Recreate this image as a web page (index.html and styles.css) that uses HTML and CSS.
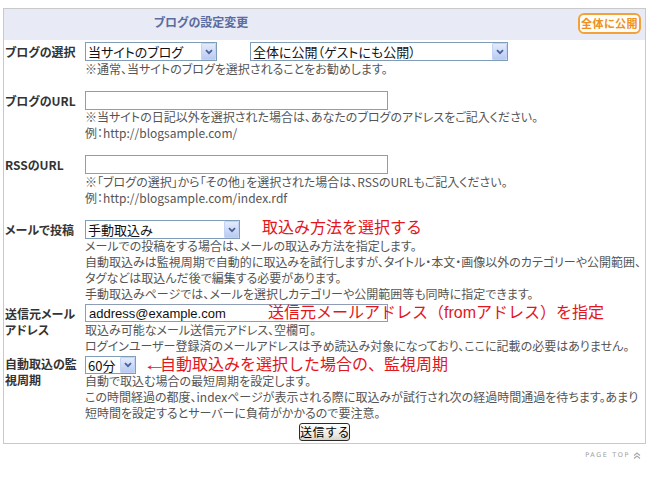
FILE: index.html
```html
<!DOCTYPE html>
<html lang="ja">
<head>
<meta charset="utf-8">
<title>ブログの設定変更</title>
<link rel="stylesheet" href="styles.css">
</head>
<body>
<div class="panel">
  <div class="panel-head">
    <h2 class="panel-title">ブログの設定変更</h2>
    <span class="badge">全体に公開</span>
  </div>
  <form class="form">
    <div class="row row-spaced">
      <div class="label">ブログの選択</div>
      <div class="field">
        <div class="controls">
          <span class="select w-blog"><select><option>当サイトのブログ</option></select><span class="arrow"><svg width="8" height="6" viewBox="0 0 8 6"><path d="M1 1.2 L4 4.2 L7 1.2" fill="none" stroke="#4a6299" stroke-width="1.8"/></svg></span></span>
          <span class="select w-scope"><select><option>全体に公開（ゲストにも公開）</option></select><span class="arrow"><svg width="8" height="6" viewBox="0 0 8 6"><path d="M1 1.2 L4 4.2 L7 1.2" fill="none" stroke="#4a6299" stroke-width="1.8"/></svg></span></span>
        </div>
        <p class="note">※通常、当サイトのブログを選択されることをお勧めします。</p>
      </div>
    </div>

    <div class="row row-spaced">
      <div class="label">ブログのURL</div>
      <div class="field">
        <div class="controls"><input class="text-input" type="text" value=""></div>
        <p class="note note-up">※当サイトの日記以外を選択された場合は、あなたのブログのアドレスをご記入ください。<br>例：http://blogsample.com/</p>
      </div>
    </div>

    <div class="row row-spaced">
      <div class="label">RSSのURL</div>
      <div class="field">
        <div class="controls"><input class="text-input" type="text" value=""></div>
        <p class="note">※「ブログの選択」から「その他」を選択された場合は、RSSのURLもご記入ください。<br>例：http://blogsample.com/index.rdf</p>
      </div>
    </div>

    <div class="row">
      <div class="label">メールで投稿</div>
      <div class="field">
        <div class="controls">
          <span class="select w-mail"><select><option>手動取込み</option></select><span class="arrow"><svg width="8" height="6" viewBox="0 0 8 6"><path d="M1 1.2 L4 4.2 L7 1.2" fill="none" stroke="#4a6299" stroke-width="1.8"/></svg></span></span>
          <span class="hint hint-mail">取込み方法を選択する</span>
        </div>
        <p class="note note-up">メールでの投稿をする場合は、メールの取込み方法を指定します。<br>自動取込みは監視周期で自動的に取込みを試行しますが、タイトル・本文・画像以外のカテゴリーや公開範囲、<br>タグなどは取込んだ後で編集する必要があります。<br>手動取込みページでは、メールを選択しカテゴリーや公開範囲等も同時に指定できます。</p>
      </div>
    </div>

    <div class="row">
      <div class="label">送信元メールアドレス</div>
      <div class="field">
        <div class="controls controls-short">
          <input class="text-input text-mono" type="text" value="address@example.com">
          <span class="hint hint-over">送信元メールアドレス（fromアドレス）を指定</span>
        </div>
        <p class="note">取込み可能なメール送信元アドレス、空欄可。<br>ログインユーザー登録済のメールアドレスは予め読込み対象になっており、ここに記載の必要はありません。</p>
      </div>
    </div>

    <div class="row">
      <div class="label label-tight">自動取込の監視周期</div>
      <div class="field">
        <div class="controls controls-short">
          <span class="select w-period"><select><option>60分</option></select><span class="arrow"><svg width="8" height="6" viewBox="0 0 8 6"><path d="M1 1.2 L4 4.2 L7 1.2" fill="none" stroke="#4a6299" stroke-width="1.8"/></svg></span></span>
          <span class="hint hint-period"><span class="hint-arrow">←</span>自動取込みを選択した場合の、監視周期</span>
        </div>
        <p class="note note-up">自動で取込む場合の最短周期を設定します。<br>この時間経過の都度、indexページが表示される際に取込みが試行され次の経過時間通過を待ちます。あまり<br>短時間を設定するとサーバーに負荷がかかるので要注意。</p>
      </div>
    </div>

    <div class="actions"><button class="submit" type="button">送信する</button></div>
  </form>
</div>
<div class="pagetop">PAGE TOP <svg width="8" height="7" viewBox="0 0 8 7"><path d="M1 3.5 L4 1 L7 3.5 M1 6.5 L4 4 L7 6.5" fill="none" stroke="#a8a8a8" stroke-width="1.1"/></svg></div>
</body>
</html>
```

FILE: styles.css
```css
* { box-sizing: border-box; }

body {
  margin: 0;
  padding: 8px 0 0 3px;
  background: #fff;
  font-family: "Noto Sans CJK JP", "Noto Sans", sans-serif;
  font-size: 12px;
  color: #555;
  font-feature-settings: "palt";
}

.panel {
  width: 643px;
  border: 1px solid #c9c9c9;
}

.panel-head {
  display: flex;
  align-items: flex-start;
  height: 31px;
  background: #e8eaf6;
}

.panel-title {
  margin: 0;
  width: 394px;
  padding-top: 5px;
  text-align: center;
  font-size: 12px;
  font-weight: bold;
  color: #5b6c9e;
  line-height: 16px;
}

.badge {
  margin-left: auto;
  margin-right: 4px;
  margin-top: 4px;
  width: 63px;
  height: 21px;
  border: 2px solid #f2a23a;
  border-radius: 6px;
  background: #fffdf8;
  color: #ee8f22;
  font-size: 11px;
  font-weight: bold;
  line-height: 17px;
  text-align: center;
  letter-spacing: 0.5px;
}

.form { padding: 0; }

.row {
  display: grid;
  grid-template-columns: 81px 1fr;
  margin-top: 2px;
}

.row-spaced { margin-bottom: 14px; }

.label {
  padding: 2px 0 0 1px;
  font-weight: bold;
  color: #333;
  line-height: 16px;
}

.label-tight { padding-top: 0; }

.controls {
  position: relative;
  display: flex;
  align-items: flex-start;
  height: 19px;
}

.controls-short { height: 18px; }

.select {
  position: relative;
  display: inline-block;
  height: 19px;
}

.controls-short .select,
.controls-short .select select,
.controls-short .text-input { height: 18px; }

.controls-short .select .arrow { height: 16px; }

.select select {
  appearance: none;
  -webkit-appearance: none;
  width: 100%;
  height: 19px;
  margin: 0;
  padding: 0 18px 0 2px;
  border: 1px solid #7f9db9;
  border-radius: 0;
  background: #fff;
  font-family: "Noto Sans CJK JP", sans-serif;
  font-feature-settings: "palt";
  font-size: 13px;
  line-height: 17px;
  color: #111;
}

.select .arrow {
  position: absolute;
  top: 1px;
  right: 1px;
  width: 15px;
  height: 17px;
  border: 1px solid #c3d3f5;
  border-radius: 1px;
  background: linear-gradient(#e3ebfc, #b9cbf2);
  display: flex;
  align-items: center;
  justify-content: center;
  pointer-events: none;
}

.w-blog { width: 132px; margin-right: 33px; }
.w-scope { width: 258px; }
.w-mail { width: 155px; }
.w-period { width: 51px; }

.text-input {
  width: 303px;
  height: 19px;
  margin: 0;
  padding: 0 3px;
  border: 1px solid #8d9db5;
  background: #fff;
  font-size: 13px;
  color: #111;
}

.text-mono {
  font-family: "Liberation Sans", Arial, sans-serif;
}

/* red annotations laid over the form */
.hint {
  position: absolute;
  top: 1px;
  font-family: "Liberation Sans", "Noto Sans CJK JP", sans-serif;
  font-size: 16px;
  line-height: 16px;
  color: #e2161c;
  font-feature-settings: normal;
  white-space: nowrap;
}

.hint-mail { left: 177px; top: 0; }
.hint-over { left: 183px; }
.hint-period { left: 58px; }

.hint-arrow {
  display: inline-block;
  width: 17px;
  transform: scaleX(1.5);
  transform-origin: left center;
}

.note {
  margin: 0;
  line-height: 16px;
  white-space: nowrap;
}

.note-up { margin-top: -1px; }

.actions {
  display: flex;
  justify-content: center;
  padding: 2px 0 2px;
}

.submit {
  height: 18px;
  width: 51px;
  padding: 0;
  border: 1px solid #2b2b2b;
  border-radius: 3px;
  background: linear-gradient(#ffffff, #ece9e0 70%, #d8d4c8);
  font-family: "Noto Sans CJK JP", sans-serif;
  font-size: 12px;
  letter-spacing: 0.5px;
  line-height: 16px;
  white-space: nowrap;
  color: #000;
}

.pagetop {
  width: 643px;
  display: flex;
  justify-content: flex-end;
  align-items: center;
  gap: 3px;
  padding: 7px 5px 0 0;
  font-family: "DejaVu Sans", sans-serif;
  font-size: 6.5px;
  letter-spacing: 1.6px;
  color: #a0a0a0;
}
```
